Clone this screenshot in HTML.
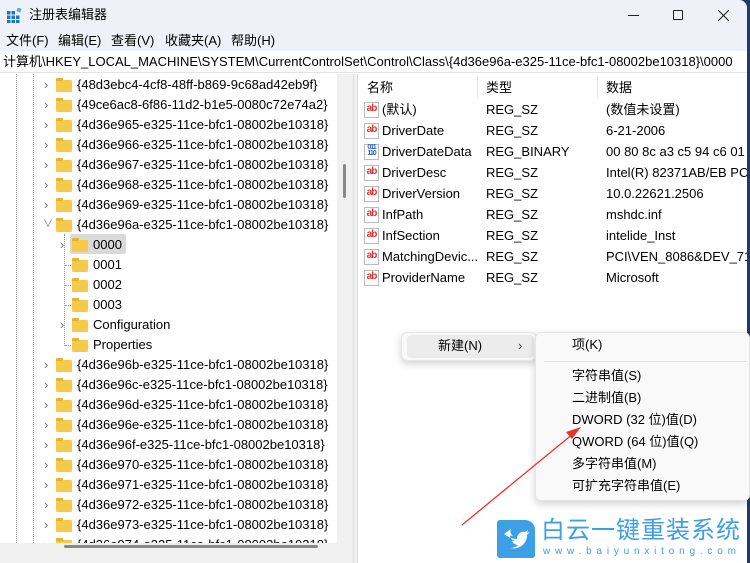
<!DOCTYPE html>
<html><head><meta charset="utf-8"><style>
*{margin:0;padding:0;box-sizing:border-box}
body{width:750px;height:563px;overflow:hidden;position:relative;background:#1d3a6e;font-family:"Liberation Sans","Noto Sans CJK SC",sans-serif;font-size:13px;line-height:16px;color:#000}
.win{position:absolute;left:0;top:0;width:747px;height:563px;background:#fff;border-top-right-radius:8px;overflow:hidden}
.title{position:absolute;left:0;top:0;width:100%;height:30px;background:#eef2f8}
.menu{position:absolute;left:0;top:30px;width:100%;height:21px;background:#eef2f8}
.menu span{position:absolute;top:3px}
.addr{position:absolute;left:0;top:51px;width:100%;height:22px;background:#fff;border-bottom:1px solid #e3e3e3;padding:3px 0 0 3px;white-space:nowrap}
.tree{position:absolute;left:0;top:74px;width:337px;height:469px;overflow:hidden}
.row{position:absolute;height:20px;line-height:20px;white-space:nowrap}
.fold{position:absolute;width:16px;height:12px;background:#f7c948;border-radius:1px;top:5px}
.fold:before{content:"";position:absolute;left:0;top:-2px;width:7px;height:3px;background:#e9b22f;border-radius:1px 1px 0 0}
.chev{position:absolute;color:#777;font-size:11px;top:0}
.vs{position:absolute;left:337px;top:74px;width:16px;height:469px;background:#f0f0f0}
.split{position:absolute;left:353px;top:74px;width:5px;height:489px;background:#f0f0f0;border-left:1px solid #ddd;border-right:1px solid #ddd}
.hs{position:absolute;left:0;top:543px;width:353px;height:20px;background:#f0f0f0}
.rp{position:absolute;left:358px;top:74px;width:389px;height:489px}
.hd{position:absolute;top:6px}
.ic{position:absolute;left:6px;width:15px;height:16px;border:1px solid #bbb;background:#fff;color:#d33;font-size:10px;font-weight:bold;line-height:12px;text-align:center;letter-spacing:-1px}
.cm{position:absolute;background:#f9f9f9;border:1px solid #e5e5e5;border-radius:6px;box-shadow:0 3px 8px rgba(0,0,0,.18)}
.mi{position:absolute;left:36px;white-space:nowrap}
</style></head><body>
<div class="win">
<div class="title">
 <svg style="position:absolute;left:7px;top:8px" width="15" height="15" viewBox="0 0 15 15"><g fill="#1f74c8"><rect x="0" y="3" width="3.5" height="3.5"/><rect x="4.5" y="3" width="3.5" height="3.5"/><rect x="0" y="7.5" width="3.5" height="3.5"/><rect x="4.5" y="7.5" width="3.5" height="3.5"/><rect x="9" y="7.5" width="3.5" height="3.5"/><rect x="0" y="12" width="3.5" height="3"/><rect x="4.5" y="12" width="3.5" height="3"/><rect x="9" y="12" width="3.5" height="3"/></g><rect x="10" y="0" width="4" height="4" fill="#4cb0f0" transform="rotate(20 12 2)"/></svg>
 <span style="position:absolute;left:29px;top:7px">注册表编辑器</span>
 <div style="position:absolute;left:628px;top:15px;width:11px;height:1px;background:#222"></div>
 <div style="position:absolute;left:673px;top:10px;width:10px;height:10px;border:1px solid #222;border-radius:1px"></div>
 <svg style="position:absolute;left:718px;top:10px" width="11" height="11"><path d="M0 0L11 11M11 0L0 11" stroke="#222" stroke-width="1.1"/></svg>
</div>
<div class="menu"><span style="left:6px">文件(F)</span><span style="left:58px">编辑(E)</span><span style="left:111px">查看(V)</span><span style="left:165px">收藏夹(A)</span><span style="left:231px">帮助(H)</span></div>
<div class="addr">计算机\HKEY_LOCAL_MACHINE\SYSTEM\CurrentControlSet\Control\Class\{4d36e96a-e325-11ce-bfc1-08002be10318}\0000</div>
<div class="tree">
<div style="position:absolute;left:16px;top:0;height:469px;border-left:1px dotted #999"></div>
<div style="position:absolute;left:33px;top:0;height:469px;border-left:1px dotted #999"></div>
<div style="position:absolute;left:64px;top:160px;height:112px;border-left:1px dotted #999"></div>
<div id="t"></div>
</div>
<div class="vs"><div style="position:absolute;left:6px;top:90px;width:3px;height:34px;background:#888;border-radius:2px"></div></div>
<div class="hs"><div style="position:absolute;left:64px;top:2px;width:254px;height:3px;background:#888;border-radius:2px"></div></div>
<div class="split"></div>
<div class="rp">
 <span class="hd" style="left:9px">名称</span><span class="hd" style="left:128px">类型</span><span class="hd" style="left:248px">数据</span>
 <div style="position:absolute;left:119px;top:2px;width:1px;height:22px;background:#e5e5e5"></div>
 <div style="position:absolute;left:239px;top:2px;width:1px;height:22px;background:#e5e5e5"></div>
 <div id="r"></div>
</div>
</div>
<div class="cm" style="left:401px;top:332px;width:136px;height:29px"><div style="position:absolute;left:5px;top:2px;width:127px;height:23px;background:#ececec;border-radius:4px"></div><span class="mi" style="top:5px">新建(N)</span><span style="position:absolute;left:116px;top:5px;color:#444">›</span></div>
<div class="cm" style="left:535px;top:332px;width:215px;height:169px">
<span class="mi" style="top:4px">项(K)</span>
<div style="position:absolute;left:8px;top:28px;width:202px;height:1px;background:#ddd"></div>
<span class="mi" style="top:35px">字符串值(S)</span>
<span class="mi" style="top:57px">二进制值(B)</span>
<span class="mi" style="top:79px">DWORD (32 位)值(D)</span>
<span class="mi" style="top:101px">QWORD (64 位)值(Q)</span>
<span class="mi" style="top:123px">多字符串值(M)</span>
<span class="mi" style="top:145px">可扩充字符串值(E)</span>
</div>
<svg style="position:absolute;left:0;top:0" width="750" height="563"><line x1="462" y1="525" x2="574" y2="433" stroke="#e8322e" stroke-width="1.3"/><path d="M581 427L566 432L572 439Z" fill="#e8322e"/></svg>
<div style="position:absolute;left:497px;top:520px;width:38px;height:38px;background:#3d9fe6;border-radius:3px 10px 3px 3px"><svg width="38" height="38" viewBox="0 0 38 38"><path d="M7 14c4 3 8 5 13 5 0-5 4-8 8-7l3-2-1 3 3-1-3 3c0 9-8 15-17 13 3 0 6-1 8-3-3 0-5-2-6-4h3c-3-1-5-3-5-6 1 1 2 1 3 1-3-2-3-5-2-7z" fill="#fff"/></svg></div>
<div style="position:absolute;left:541px;top:517px;color:#3d9fe6;font-size:24px;line-height:28px;letter-spacing:1px;white-space:nowrap">白云一键重装系统</div>
<div style="position:absolute;left:543px;top:546px;color:#3d9fe6;font-size:10px;line-height:12px;letter-spacing:4.8px;white-space:nowrap">www.baiyunxitong.com</div>
<script>
var t=document.getElementById('t'),h='';
var rows=[['{48d3ebc4-4cf8-48ff-b869-9c68ad42eb9f}',0,'>'],['{49ce6ac8-6f86-11d2-b1e5-0080c72e74a2}',0,'>']];
['e965','e966','e967','e968','e969'].forEach(function(a){rows.push(['{4d36'+a+'-e325-11ce-bfc1-08002be10318}',0,'>'])});
rows.push(['{4d36e96a-e325-11ce-bfc1-08002be10318}',0,'v']);
rows.push(['0000',1,'>'],['0001',1,''],['0002',1,''],['0003',1,''],['Configuration',1,'>'],['Properties',1,'']);
['e96b','e96c','e96d','e96e','e96f','e970','e971','e972','e973','e974'].forEach(function(a){rows.push(['{4d36'+a+'-e325-11ce-bfc1-08002be10318}',0,'>'])});
rows.forEach(function(r,i){var y=i*20+1,o=r[1]?16:0;
if(r[0]=='0000')h+='<div style="position:absolute;left:70px;top:'+(y-1)+'px;width:56px;height:20px;background:#d9d9d9;border-radius:2px"></div>';
if(r[2]=='>')h+='<span class="chev" style="left:'+(44+o)+'px;top:'+y+'px;line-height:20px;font-size:13px">›</span>';
if(r[2]=='v')h+='<span class="chev" style="left:43px;top:'+y+'px;line-height:20px;font-size:10px">∨</span>';
if(r[1]&&!r[2])h+='<div style="position:absolute;left:65px;top:'+(y+10)+'px;width:6px;border-top:1px dotted #999"></div>';
h+='<div class="row" style="left:'+(56+o)+'px;top:'+y+'px"><div class="fold" style="left:0"></div><span style="margin-left:21px">'+r[0]+'</span></div>';});
t.innerHTML=h;
var R=[['(默认)','REG_SZ','(数值未设置)'],['DriverDate','REG_SZ','6-21-2006'],['DriverDateData','REG_BINARY','00 80 8c a3 c5 94 c6 01'],['DriverDesc','REG_SZ','Intel(R) 82371AB/EB PCI'],['DriverVersion','REG_SZ','10.0.22621.2506'],['InfPath','REG_SZ','mshdc.inf'],['InfSection','REG_SZ','intelide_Inst'],['MatchingDevic...','REG_SZ','PCI\\VEN_8086&DEV_711'],['ProviderName','REG_SZ','Microsoft']];
h='';R.forEach(function(r,i){var y=28+i*21;
h+='<div class="ic" style="top:'+(y)+'px;'+(i==2?'color:#2a5bd7;font-size:7px;line-height:6px':'')+'">'+(i==2?'011<br>110':'ab')+'</div>';
h+='<span style="position:absolute;left:24px;top:'+y+'px;white-space:nowrap">'+r[0]+'</span><span style="position:absolute;left:128px;top:'+y+'px">'+r[1]+'</span><span style="position:absolute;left:248px;top:'+y+'px;white-space:nowrap">'+r[2]+'</span>';});
document.getElementById('r').innerHTML=h;
</script>
</body></html>
